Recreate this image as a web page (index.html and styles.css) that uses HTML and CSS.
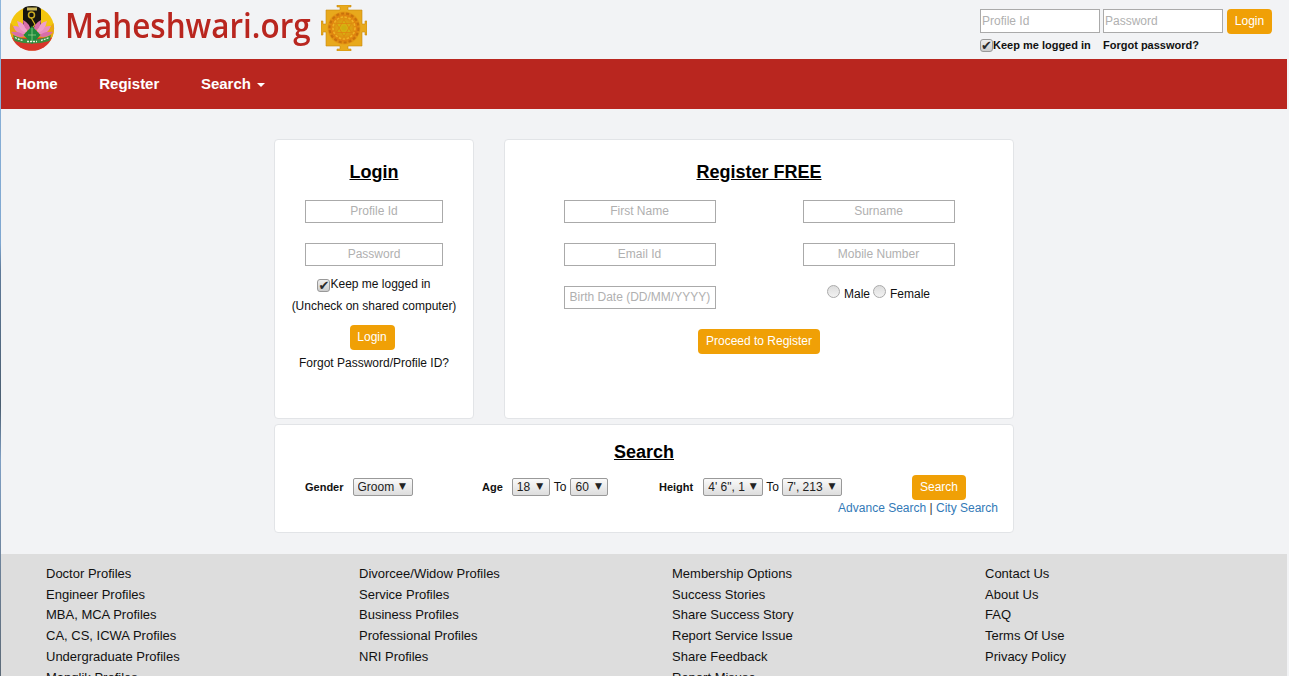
FILE: index.html
```html
<!DOCTYPE html>
<html lang="en">
<head>
<meta charset="utf-8">
<title>Maheshwari.org</title>
<link rel="stylesheet" href="styles.css">
</head>
<body>
<div class="page">
  <header class="top">
    <div class="brand">
      <svg class="emblem" width="46" height="46" viewBox="0 0 46 46" aria-hidden="true">
        <circle cx="23" cy="23.5" r="22" fill="#f3c60f"/>
        <path d="M1.6 18a22 22 0 0 0 1 14h40.800a22 22 0 0 0 1-14l-6 7H8z" fill="#e8a812"/>
        <path d="M2.800 32.500a22 22 0 0 0 40.400 0z" fill="#d8352a"/>
        <path d="M4 30q19 9 38 0l-1.500 6q-17.500 5-35 0z" fill="#3c8f3f"/>
        <path d="M14 23V5q0-4 9-4t9 4v18z" fill="#17150f"/>
        <rect x="18" y="2.500" width="10" height="3" fill="#cbb95a"/>
        <circle cx="22.500" cy="10" r="3" fill="none" stroke="#c9a920" stroke-width="1.500"/>
        <path d="M22 12.500l4 7-3 4" fill="none" stroke="#d8b820" stroke-width="1.200"/>
        <path d="M4 21q9-1 13 8-9 2-13-8zM42 21q-9-1-13 8 9 2 13-8z" fill="#e88fc0"/>
        <path d="M8 16q8 1 11 12-9-1-11-12zM38 16q-8 1-11 12 9-1 11-12z" fill="#ef9fcb"/>
        <path d="M14 15q7 3 8 12-8-3-8-12zM32 15q-7 3-8 12 8-3 8-12z" fill="#d86ea9"/>
        <path d="M2 27q9-1 14 4-8 3-14-4zM44 27q-9-1-14 4 8 3 14-4z" fill="#d96ea9"/>
        <path d="M23 21l8.500 9-8.500 9-8.500-9z" fill="#1f8a3c"/>
        <path d="M23 23v14M19 30h8" stroke="#a6d98f" stroke-width=".7"/>
        <path d="M6 32.500q4 2 8 3M18 36.500h10M32 35.500q4-1 8-3" fill="none" stroke="#e9f1de" stroke-width="1.300" stroke-dasharray="2 1"/>
      </svg>
      <span class="site-name">Maheshwari.org</span>
      <svg class="yantra" width="46" height="46" viewBox="0 0 46 46" aria-hidden="true">
        <defs>
          <radialGradient id="yantraGlow" cx="50%" cy="50%" r="50%">
            <stop offset="0" stop-color="#d2b012"/>
            <stop offset=".45" stop-color="#dd9f12"/>
            <stop offset=".75" stop-color="#e0820f"/>
            <stop offset="1" stop-color="#e59a14"/>
          </radialGradient>
        </defs>
        <path d="M16 0h14v2h-3v3h14v14h3v-3h2v14h-2v-3h-3v14H27v3h3v2H16v-2h3v-3H5V27H2v3H0V16h2v3h3V5h14V2h-3z" fill="#e8a91c" stroke="#c88a12" stroke-width=".6"/>
        <circle cx="23" cy="23" r="16.500" fill="url(#yantraGlow)"/>
        <circle cx="23" cy="23" r="14.500" fill="none" stroke="#c9720c" stroke-width="2.200" stroke-dasharray="3 2"/>
        <circle cx="23" cy="23" r="11" fill="none" stroke="#efb224" stroke-width="1.600" stroke-dasharray="2.500 1.500"/>
        <path d="M23 14.500l7.500 13h-15zM23 31.500l-7.500-13h15z" fill="#d8b012" stroke="#e2800f" stroke-width=".7"/>
        <circle cx="23" cy="23" r="2.500" fill="#cfae10"/>
      </svg>
    </div>
    <form class="quick-login">
      <div class="quick-row">
        <input class="quick-input" type="text" placeholder="Profile Id">
        <input class="quick-input" type="password" placeholder="Password">
        <button class="btn quick-btn" type="button">Login</button>
      </div>
      <div class="quick-meta">
        <label class="quick-keep"><input class="check" type="checkbox" checked>Keep me logged in</label>
        <a class="quick-forgot" href="#">Forgot password?</a>
      </div>
    </form>
  </header>

  <nav class="nav">
    <a class="nav-link" href="#">Home</a>
    <a class="nav-link" href="#">Register</a>
    <a class="nav-link" href="#">Search<span class="caret"></span></a>
  </nav>

  <main class="main">
    <div class="cards">
      <section class="card login-card">
        <h2 class="card-title">Login</h2>
        <input class="field field-login" type="text" placeholder="Profile Id">
        <input class="field field-login" type="password" placeholder="Password">
        <label class="keep"><input class="check" type="checkbox" checked>Keep me logged in</label>
        <p class="note">(Uncheck on shared computer)</p>
        <button class="btn login-btn" type="button">Login</button>
        <a class="forgot" href="#">Forgot Password/Profile ID?</a>
      </section>
      <section class="card register-card">
        <h2 class="card-title">Register FREE</h2>
        <div class="register-grid">
          <input class="field" type="text" placeholder="First Name">
          <input class="field" type="text" placeholder="Surname">
          <input class="field" type="text" placeholder="Email Id">
          <input class="field" type="text" placeholder="Mobile Number">
          <input class="field field-left" type="text" placeholder="Birth Date (DD/MM/YYYY)">
          <div class="gender">
            <label class="gender-opt"><input class="radio" type="radio" name="g">Male</label>
            <label class="gender-opt"><input class="radio" type="radio" name="g">Female</label>
          </div>
        </div>
        <button class="btn register-btn" type="button">Proceed to Register</button>
      </section>
    </div>
    <section class="card search-card">
      <h2 class="card-title">Search</h2>
      <div class="search-row">
        <div class="search-group group-gender">
          <b class="search-label">Gender</b>
          <span class="sel sel-gender"><select><option>Groom</option></select></span>
        </div>
        <div class="search-group group-age">
          <b class="search-label">Age</b>
          <span class="sel sel-age1"><select><option>18</option></select></span>
          <span class="to">To</span>
          <span class="sel sel-age2"><select><option>60</option></select></span>
        </div>
        <div class="search-group group-height">
          <b class="search-label">Height</b>
          <span class="sel sel-height"><select><option>4' 6", 1</option></select></span>
          <span class="to">To</span>
          <span class="sel sel-height"><select><option>7', 213</option></select></span>
        </div>
        <button class="btn search-btn" type="button">Search</button>
      </div>
      <div class="search-links"><a href="#">Advance Search</a> | <a href="#">City Search</a></div>
    </section>
  </main>

  <footer class="footer">
    <ul class="foot-col">
      <li><a href="#">Doctor Profiles</a></li>
      <li><a href="#">Engineer Profiles</a></li>
      <li><a href="#">MBA, MCA Profiles</a></li>
      <li><a href="#">CA, CS, ICWA Profiles</a></li>
      <li><a href="#">Undergraduate Profiles</a></li>
      <li><a href="#">Manglik Profiles</a></li>
    </ul>
    <ul class="foot-col">
      <li><a href="#">Divorcee/Widow Profiles</a></li>
      <li><a href="#">Service Profiles</a></li>
      <li><a href="#">Business Profiles</a></li>
      <li><a href="#">Professional Profiles</a></li>
      <li><a href="#">NRI Profiles</a></li>
    </ul>
    <ul class="foot-col">
      <li><a href="#">Membership Options</a></li>
      <li><a href="#">Success Stories</a></li>
      <li><a href="#">Share Success Story</a></li>
      <li><a href="#">Report Service Issue</a></li>
      <li><a href="#">Share Feedback</a></li>
      <li><a href="#">Report Misuse</a></li>
    </ul>
    <ul class="foot-col">
      <li><a href="#">Contact Us</a></li>
      <li><a href="#">About Us</a></li>
      <li><a href="#">FAQ</a></li>
      <li><a href="#">Terms Of Use</a></li>
      <li><a href="#">Privacy Policy</a></li>
    </ul>
  </footer>
</div>
</body>
</html>
```

FILE: styles.css
```css
* { box-sizing: border-box; }
html, body { margin: 0; height: 100%; overflow: hidden; }
body {
  background-color: #f2f3f5;
  font-family: "Liberation Sans", Arial, sans-serif;
  font-size: 12px;
  color: #111;
  padding-left: 1px;
  padding-right: 2px;
  background-image: linear-gradient(#8fb6dc 0, #7ea6d0 36%, #5f7a99 40%, #4a5d70 60%, #7f9fc4 68%, #6b7f95 85%, #5c6a78 100%);
  background-size: 1px 100%;
  background-repeat: no-repeat;
}
a { color: inherit; text-decoration: none; }
input, button, select { font-family: inherit; margin: 0; }
.page { background: #f2f3f5; min-height: 100%; }

.top { height: 59px; display: flex; justify-content: space-between; padding: 5px 15px 0 8px; }
.brand { display: flex; align-items: flex-start; }
.emblem { flex: none; margin-right: 10px; filter: blur(.3px); }
.site-name {
  font-family: "Open Sans", sans-serif;
  font-size: 34px;
  line-height: 40px;
  color: #b9261f;
  font-weight: 600;
  margin-right: -10px;
  transform: scaleX(.925);
  transform-origin: left center;
}
.yantra { flex: none; filter: blur(.4px); }

.quick-login { padding-top: 4px; width: 292px; }
.quick-row { display: flex; align-items: flex-start; }
.quick-input {
  width: 120px; height: 24px; border: 1px solid #aaa; background: #fff;
  padding: 0 1px; font-size: 12px; margin-right: 3px;
}
.quick-input::placeholder, .field::placeholder { color: #b0b0b0; opacity: 1; }
.quick-btn { width: 45px; height: 25px; margin-left: 1px; }
.quick-meta { display: flex; font-size: 11px; font-weight: 700; margin-top: 5px; line-height: 13px; }
.quick-keep { display: flex; align-items: center; width: 123px; }
.btn {
  background: #f0a006; color: #fff; border: 0; border-radius: 4px;
  font-size: 12px; padding: 0 0 1px; cursor: pointer;
}
.check {
  appearance: none; width: 13px; height: 13px; margin: 0; flex: none;
  border: 1px solid #999; border-radius: 3px;
  background: linear-gradient(#eee, #ccc);
  position: relative;
}
.check::after {
  content: "\2714"; position: absolute; left: 0; top: -1px;
  font: 13px/13px "DejaVu Sans", sans-serif; color: #2a2a2a;
}

.nav { height: 50px; background: #b9261f; display: flex; padding-left: 15px; }
.nav-link {
  color: #fff; font-size: 15px; font-weight: 700; line-height: 50px; margin-right: 41.6px;
  display: flex; align-items: center;
}
.caret {
  width: 0; height: 0; margin-left: 6px; margin-top: 2px;
  border-top: 4px solid #fff; border-left: 4px solid transparent; border-right: 4px solid transparent;
}

.main { width: 740px; margin-left: 273px; padding-top: 30px; }
.cards { display: flex; justify-content: space-between; }
.card { background: #fff; border: 1px solid #e2e4e7; border-radius: 4px; }
.card-title {
  margin: 0; font-size: 18px; font-weight: 700; line-height: 20px; text-align: center;
  text-decoration: underline; color: #000;
}
.field {
  display: block; height: 23px; width: 152px; border: 1px solid #aaa; background: #fff;
  font-size: 12px; text-align: center; padding: 0 4px 2px; color: #333;
}
.login-card {
  width: 200px; height: 280px; display: flex; flex-direction: column; align-items: center;
  padding-top: 22px;
}
.login-card .card-title { margin-bottom: 18px; }
.field-login { width: 138px; margin-bottom: 20px; }
.field-login + .keep { margin-top: -11px; }
.keep { display: flex; align-items: center; line-height: 16px; }
.keep .check { margin-top: 4px; }
.note { margin: 6px 0 0; line-height: 16px; }
.login-btn { width: 45px; height: 25px; margin: 11px 4px 0 0; }
.forgot { margin-top: 5px; line-height: 16px; }

.register-card { width: 510px; height: 280px; padding-top: 22px; display: flex; flex-direction: column; align-items: center; }
.register-card .card-title { margin-bottom: 18px; }
.register-grid {
  display: grid; grid-template-columns: 152px 152px; column-gap: 87px; row-gap: 20px;
}
.field-left { text-align: left; padding-left: 5px; }
.gender { display: flex; justify-content: center; align-items: center; gap: 3px; margin-top: -8px; }
.gender-opt { display: flex; align-items: center; }
.radio {
  appearance: none; width: 13px; height: 13px; margin: -5px 4px 0 0; border-radius: 50%;
  border: 1px solid #aaa; background: linear-gradient(#ddd, #f2f2f2);
}
.register-btn { width: 122px; height: 25px; margin-top: 20px; }

.search-card { height: 109px; margin-top: 5px; padding: 17px 15px 0; }
.search-row { display: flex; align-items: flex-start; margin-top: 13px; height: 26px; padding-left: 15px; }
.search-group { display: flex; align-items: center; height: 24px; }
.group-gender { width: 177px; }
.group-age { width: 177px; }
.group-height { width: 253px; }
.search-label { font-size: 11px; }
.group-gender .search-label { margin-right: 9px; }
.group-age .search-label { margin-right: 9px; }
.group-height .search-label { margin-right: 10px; }
.group-age .to { margin: 0 4px; }
.group-height .to { margin: 0 3px; }
.sel { position: relative; display: inline-block; height: 18px; }
.sel::after {
  content: "\25BC"; position: absolute; right: 6.5px; top: 3px;
  font: 9px/11px "DejaVu Sans", sans-serif; color: #222; pointer-events: none;
}
.sel select {
  appearance: none; width: 100%; height: 18px; border: 1px solid #999; border-radius: 2px;
  background: linear-gradient(#fafafa, #ddd); font-size: 12px; color: #222; padding: 0 4px;
}
.sel-gender { width: 60px; }
.sel-age1 { width: 38px; }
.sel-age2 { width: 38px; }
.sel-height { width: 60px; }
.search-btn { width: 54px; height: 25px; }
.search-links { text-align: right; color: #333; line-height: 14px; }
.search-links a { color: #337ab7; }

.footer {
  margin-top: 21px; background: #ddd; height: 200px; display: grid;
  grid-template-columns: repeat(4, 313px); padding: 9.8px 0 0 45px;
  font-size: 13px; color: #111;
}
.foot-col { list-style: none; margin: 0; padding: 0; }
.foot-col li { line-height: 20.75px; }
```
